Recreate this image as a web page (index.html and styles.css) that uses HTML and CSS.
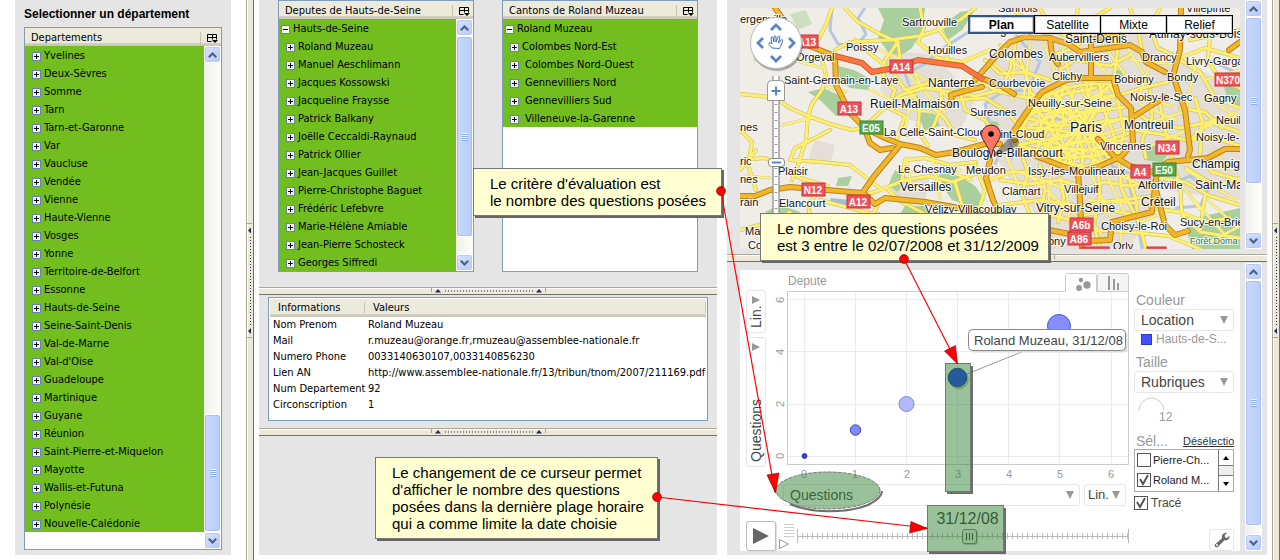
FILE: index.html
```html
<!DOCTYPE html>
<html lang="fr">
<head>
<meta charset="utf-8">
<title>Selectionner un département</title>
<link rel="stylesheet" href="styles.css">
</head>
<body>
<svg class="defs" aria-hidden="true">
  <symbol id="i-cols" viewBox="0 0 11 11"><path d="M.5 1.500h9v5M.5 1.500v7h4M.5 4.500h9M5.500 1.500v5" stroke="#000" fill="none"/><path d="M5 7h6l-3 3z"/></symbol>
  <symbol id="i-up" viewBox="0 0 9 6"><path d="M.8 5.200 4.500 1.500l3.700 3.700" fill="none" stroke="#4d6185" stroke-width="2.200"/></symbol>
  <symbol id="i-down" viewBox="0 0 9 6"><path d="M.8.800l3.700 3.700L8.200.800" fill="none" stroke="#4d6185" stroke-width="2.200"/></symbol>
  <symbol id="i-grip-h" viewBox="0 0 115 6"><path d="M.500 0v4M114.500 0v4" stroke="#a8a594"/><path d="M4 4.500h6L7 1zM105 4.500h6L108 1z" fill="#27275a"/><path d="M14 3h88" stroke="#27275a" stroke-dasharray="1 2"/></symbol>
  <symbol id="i-grip-v" viewBox="0 0 6 115"><path d="M0 .500h5M0 114.500h5" stroke="#a8a594"/><path d="M4 4.500v6L1 7.500zM4 105v6L1 108z" fill="#27275a"/><path d="M3.500 14v88" stroke="#27275a" stroke-dasharray="1 2"/></symbol>
</svg>

<main class="app">
  <section class="panel sidebar">
    <h1 class="title">Selectionner un département</h1>
    <div class="box">
      <header class="box-head"><span>Departements</span><svg class="cols"><use href="#i-cols"/></svg></header>
      <div class="box-body">
        <ul class="tree">
          <li><button class="tg" aria-label="Ouvrir"></button>Yvelines</li>
          <li><button class="tg" aria-label="Ouvrir"></button>Deux-Sèvres</li>
          <li><button class="tg" aria-label="Ouvrir"></button>Somme</li>
          <li><button class="tg" aria-label="Ouvrir"></button>Tarn</li>
          <li><button class="tg" aria-label="Ouvrir"></button>Tarn-et-Garonne</li>
          <li><button class="tg" aria-label="Ouvrir"></button>Var</li>
          <li><button class="tg" aria-label="Ouvrir"></button>Vaucluse</li>
          <li><button class="tg" aria-label="Ouvrir"></button>Vendée</li>
          <li><button class="tg" aria-label="Ouvrir"></button>Vienne</li>
          <li><button class="tg" aria-label="Ouvrir"></button>Haute-Vienne</li>
          <li><button class="tg" aria-label="Ouvrir"></button>Vosges</li>
          <li><button class="tg" aria-label="Ouvrir"></button>Yonne</li>
          <li><button class="tg" aria-label="Ouvrir"></button>Territoire-de-Belfort</li>
          <li><button class="tg" aria-label="Ouvrir"></button>Essonne</li>
          <li><button class="tg" aria-label="Ouvrir"></button>Hauts-de-Seine</li>
          <li><button class="tg" aria-label="Ouvrir"></button>Seine-Saint-Denis</li>
          <li><button class="tg" aria-label="Ouvrir"></button>Val-de-Marne</li>
          <li><button class="tg" aria-label="Ouvrir"></button>Val-d'Oise</li>
          <li><button class="tg" aria-label="Ouvrir"></button>Guadeloupe</li>
          <li><button class="tg" aria-label="Ouvrir"></button>Martinique</li>
          <li><button class="tg" aria-label="Ouvrir"></button>Guyane</li>
          <li><button class="tg" aria-label="Ouvrir"></button>Réunion</li>
          <li><button class="tg" aria-label="Ouvrir"></button>Saint-Pierre-et-Miquelon</li>
          <li><button class="tg" aria-label="Ouvrir"></button>Mayotte</li>
          <li><button class="tg" aria-label="Ouvrir"></button>Wallis-et-Futuna</li>
          <li><button class="tg" aria-label="Ouvrir"></button>Polynésie</li>
          <li><button class="tg" aria-label="Ouvrir"></button>Nouvelle-Calédonie</li>
        </ul>
        <div class="sb">
          <button aria-label="Haut"><svg><use href="#i-up"/></svg></button>
          <i class="gap-long"></i><i class="thumb t-short"></i>
          <button aria-label="Bas"><svg><use href="#i-down"/></svg></button>
        </div>
      </div>
    </div>
  </section>

  <div class="split-v first"><svg><use href="#i-grip-v"/></svg></div>

  <div class="col middle">
    <section class="panel trees">
      <div class="box">
        <header class="box-head"><span>Deputes de Hauts-de-Seine</span><svg class="cols"><use href="#i-cols"/></svg></header>
        <div class="box-body">
          <ul class="tree nested">
            <li class="root"><button class="tg open" aria-label="Fermer"></button>Hauts-de-Seine</li>
            <li><button class="tg" aria-label="Ouvrir"></button>Roland Muzeau</li>
            <li><button class="tg" aria-label="Ouvrir"></button>Manuel Aeschlimann</li>
            <li><button class="tg" aria-label="Ouvrir"></button>Jacques Kossowski</li>
            <li><button class="tg" aria-label="Ouvrir"></button>Jacqueline Fraysse</li>
            <li><button class="tg" aria-label="Ouvrir"></button>Patrick Balkany</li>
            <li><button class="tg" aria-label="Ouvrir"></button>Joëlle Ceccaldi-Raynaud</li>
            <li><button class="tg" aria-label="Ouvrir"></button>Patrick Ollier</li>
            <li><button class="tg" aria-label="Ouvrir"></button>Jean-Jacques Guillet</li>
            <li><button class="tg" aria-label="Ouvrir"></button>Pierre-Christophe Baguet</li>
            <li><button class="tg" aria-label="Ouvrir"></button>Frédéric Lefebvre</li>
            <li><button class="tg" aria-label="Ouvrir"></button>Marie-Hélène Amiable</li>
            <li><button class="tg" aria-label="Ouvrir"></button>Jean-Pierre Schosteck</li>
            <li><button class="tg" aria-label="Ouvrir"></button>Georges Siffredi</li>
          </ul>
          <div class="sb">
            <button aria-label="Haut"><svg><use href="#i-up"/></svg></button>
            <i class="thumb"></i><i class="gap-s"></i>
            <button aria-label="Bas"><svg><use href="#i-down"/></svg></button>
          </div>
        </div>
      </div>
      <div class="box">
        <header class="box-head"><span>Cantons de Roland Muzeau</span><svg class="cols"><use href="#i-cols"/></svg></header>
        <div class="box-body">
          <ul class="tree nested">
            <li class="root"><button class="tg open" aria-label="Fermer"></button>Roland Muzeau</li>
            <li><button class="tg" aria-label="Ouvrir"></button>Colombes Nord-Est</li>
            <li class="sp"><button class="tg" aria-label="Ouvrir"></button>Colombes Nord-Ouest</li>
            <li class="sp"><button class="tg" aria-label="Ouvrir"></button>Gennevilliers Nord</li>
            <li class="sp"><button class="tg" aria-label="Ouvrir"></button>Gennevilliers Sud</li>
            <li class="sp"><button class="tg" aria-label="Ouvrir"></button>Villeneuve-la-Garenne</li>
          </ul>
        </div>
      </div>
    </section>
    <div class="split-h"><svg><use href="#i-grip-h"/></svg></div>
    <section class="panel info">
      <div class="info-box">
        <table>
          <thead><tr><th>Informations</th><th>Valeurs</th></tr></thead>
          <tbody>
            <tr><td>Nom Prenom</td><td>Roland Muzeau</td></tr>
            <tr><td>Mail</td><td>r.muzeau@orange.fr,rmuzeau@assemblee-nationale.fr</td></tr>
            <tr><td>Numero Phone</td><td>0033140630107,0033140856230</td></tr>
            <tr><td>Lien AN</td><td>http://www.assemblee-nationale.fr/13/tribun/tnom/2007/211169.pdf</td></tr>
            <tr><td>Num Departement</td><td>92</td></tr>
            <tr><td>Circonscription</td><td>1</td></tr>
          </tbody>
        </table>
      </div>
    </section>
    <div class="split-h"><svg><use href="#i-grip-h"/></svg></div>
    <section class="panel rest"></section>
  </div>

  <div class="col right">
    <section class="panel map-panel">
      <div class="map">
        <svg class="map-svg" viewBox="740 8 500 241" preserveAspectRatio="xMinYMin slice">
          <defs>
            <g id="hw">
              <path d="M775 8 785 22 802 43 835 56 836 85 850 113 865 128 885 138 900 144 920 148 936 155 955 152 985 144 1000 144"/>
              <path d="M863 125 870 143 880 150 892 148M900 145 875 175 863 192"/>
              <path d="M740 196 755 196 770 190 790 187 863 193 875 204 885 198 925 202 960 208 985 214"/>
              <path d="M975 80 997 55 1010 42 1025 37 1050 38 1068 44 1080 52 1130 45 1142 52 1146 62 1165 72"/>
              <path d="M1015 140 1013 132 1028 110 1042 92 1066 80 1083 78 1113 78 1118 95 1131 108 1133 142 1122 156 1100 166 1080 172 1062 166 1036 156"/>
              <path d="M1091 78V45M1091 40 1130 30 1175 20M1181 8 1180 50 1173 76 1185 110 1190 150 1188 156M1133 117 1165 97M984 79 1000 85 1014 94M952 105 951 95 968 90 982 87"/>
              <path d="M1098 139 1115 157 1130 166 1152 172 1168 162 1208 158 1225 149 1240 149M1157 172 1152 212 1112 222 1110 240 1085 241"/>
              <path d="M1078 172 1080 200 1082 249M1156 190 1165 225 1175 235 1188 231M1049 230 1070 234M990 160 986 178 993 200 1000 215M1229 50 1240 42M1050 38 1052 55 1058 64"/>
            </g>
            <g id="mw">
              <path d="M740 94 760 96 775 98 790 108 808 116 830 124 852 130 863 128M808 116 812 104 822 90 826 75 822 60M808 116 806 140 798 165 792 180M830 130 815 138 795 148 790 160 820 162 850 165 880 188"/>
              <path d="M740 160 765 158 780 165 800 178 828 186M740 130 752 142 748 165 756 190M756 150 740 170M805 249 812 225 808 205 822 187M740 230 770 222 790 212"/>
              <path d="M818 40 826 25 832 8M835 50 850 42 890 40 920 36 938 30 960 20 975 8M845 8 858 22 880 34 898 42 900 60M855 40 872 55 893 72 905 90 918 86 940 80"/>
              <path d="M920 8 924 28 918 42 938 58 962 62 990 50M938 28 950 44 946 60M898 42 885 60 883 80 895 90 888 108 905 116 900 130 896 142"/>
              <path d="M863 128 880 112 900 95 925 88 952 92 975 96 1000 90M908 90 920 104 918 130 928 146M928 104 945 118 955 135 975 140M940 80 942 105 932 130 905 135"/>
              <path d="M865 195 880 190 905 180 930 176 952 182 980 172M880 200 870 220 868 249M888 190 902 202 925 214 955 215M905 160 925 158 950 165 976 162M905 160 902 180M820 200 850 208 880 216"/>
              <path d="M960 90 965 110 985 120 995 135M955 100 985 98 1008 112 1020 128M975 80 1000 92 1028 98 1050 92M985 60 1000 74 1025 72 1050 80M1000 45 1020 60 1030 85 1028 110M1015 45 1010 70 1000 92"/>
              <path d="M1040 8 1050 28 1072 38 1078 8M1010 8 1030 22 1050 28 1090 20 1110 8M1052 55 1075 48 1092 30M1060 70 1075 60 1110 66 1130 55M1110 20 1130 32 1160 25 1180 30M1110 30 1118 48 1114 78"/>
              <path d="M1130 8 1138 30 1142 52M1160 8 1150 28 1158 48 1180 58 1205 48 1240 58M1190 40 1210 36 1240 30M1195 8 1210 36 1208 60 1220 80M1180 60 1200 72 1215 98 1240 108M1220 80 1240 88"/>
              <path d="M1120 95 1142 88 1168 82M1133 110 1150 122 1180 128 1210 122 1240 132M1133 130 1160 134 1186 140 1215 138 1240 146M1150 90 1152 118 1142 140 1146 158M1180 108 1205 112 1222 128M1190 140 1212 120 1240 118M1200 156 1212 172 1240 180"/>
              <path d="M1195 98 1202 120 1200 156M1160 104 1165 130 1172 158M1160 178 1185 182 1210 196 1240 205M1172 160 1180 185 1182 215 1200 232 1240 238M1186 168 1215 186 1240 178M1150 208 1180 212 1205 222 1230 218M1205 196 1200 232"/>
              <path d="M1020 150 1028 172 1022 195 1030 215M1040 165 1045 190 1040 215 1052 240M1000 180 1030 184 1060 180 1080 186M1000 205 1040 200 1080 206 1120 200 1155 196M1060 178 1064 200 1058 222M1098 168 1100 195 1094 225 1100 249"/>
              <path d="M1080 190 1105 182 1130 186 1155 182M1118 158 1122 190 1135 215M1085 215 1110 210 1130 214M1128 175 1136 200 1138 220 1146 249M1092 230 1130 232 1168 236 1200 249M1050 215 1080 222M990 180 1010 172 1040 172M975 165 985 190 978 212M955 182 962 205"/>
            </g>
            <g id="paris">
              <path d="M1015 142 1022 128 1032 112 1046 96 1066 88 1088 84 1108 84 1117 96 1120 112 1124 132 1120 150 1106 160 1086 167 1062 162 1040 152 1022 146z"/>
              <path d="M1030 92 1050 105 1075 118 1090 126 1105 138M1035 110 1060 112 1092 112 1130 106M1015 128 1040 128 1070 132 1098 136M1018 145 1045 140 1070 134 1085 118 1088 98 1086 80M1040 160 1052 142 1064 122 1060 100 1050 90"/>
              <path d="M1050 168 1062 148 1076 134 1086 112 1100 94 1112 84M1080 175 1084 152 1076 132 1070 108 1074 90M1095 166 1090 148 1082 130 1096 112 1110 98M1030 105 1045 118 1056 140 1070 160 1076 176M1045 95 1062 106 1080 102 1118 94"/>
              <path d="M1028 118 1055 126 1085 124 1130 118M1025 138 1055 148 1090 150 1120 154M1040 155 1065 158 1095 156 1126 148M1100 86 1104 110 1112 130 1120 156M1064 84 1058 110 1046 132 1034 155M1022 122 1040 108 1065 94 1096 88M1050 150 1072 142 1104 142 1132 132"/>
            </g>
            <g id="st">
              <path d="M1036 100 1048 160M1042 96 1075 170M1055 92 1110 160M1066 86 1104 166M1030 126 1108 90M1028 134 1122 100M1036 146 1126 118M1040 154 1130 126M1050 162 1128 138M1080 84 1098 130M1092 82 1074 164M1104 84 1062 168M1116 96 1050 112M1024 130 1100 162M1034 104 1124 148M1084 100 1044 150M1110 106 1090 170M1056 98 1040 128"/>
              <path d="M990 60 1025 90M1000 54 1040 80M1015 48 1012 100M1030 44 1024 96M1044 44 1060 86M1062 46 1070 78M1075 44 1110 76M1100 40 1126 76M1120 36 1150 84M1130 60 1170 64M1136 96 1172 106M1140 104 1176 120M1140 125 1184 112M1140 150 1188 130M1150 64 1138 100M1196 60 1186 110M1205 80 1240 70M1206 96 1240 120M1196 132 1236 112M1214 150 1230 170"/>
              <path d="M1004 150 1024 200M1012 170 1070 190M1032 178 1076 216M1050 176 1048 226M1066 182 1070 226M1090 172 1110 216M1104 170 1128 220M1110 170 1150 190M1088 200 1148 204M1090 220 1106 240M1122 225 1120 249M1140 222 1170 210M1172 170 1200 210M1186 170 1236 200M1190 196 1226 236M1208 200 1236 226M1210 242 1240 226"/>
              <path d="M870 90 892 100 915 95M880 106 902 108 930 112M912 96 905 128M925 92 945 112M900 66 922 88 914 72 926 80M884 62 876 80M936 86 958 108M906 158 912 190M930 150 936 176 940 198M945 170 972 180M908 172 960 170M880 50 905 62M745 176 770 178M752 22 770 20M762 222 795 235M826 86 846 92M800 62 824 68M782 125 812 118"/>
            </g>
          </defs>
          <rect x="740" y="8" width="500" height="241" fill="#f0ede7"/>
          <path d="M985 75 1010 40 1050 30 1140 30 1180 60 1240 90V200L1160 190 1130 249 1050 249 1040 220 1010 180 985 140zM888 50 935 55 975 100 960 130 910 120 880 90zM890 175 930 178 925 200 895 196zM815 140 835 145 830 165 808 158z" fill="#e4dfd6"/>
          <g fill="#a9cf9c">
            <path d="M878 8H925L922 30 912 48 900 56 888 52 878 38 884 20zM942 26 960 12 975 10 962 30 948 40z"/>
            <path d="M838 66 854 70 872 80 868 90 850 88 840 80zM824 88 840 96 848 110 836 116 820 100 808 92z"/>
            <path d="M918 112 935 114 940 126 924 130zM786 52 796 60 786 68 778 62zM895 170 906 178 898 192 888 186z"/>
            <path d="M938 172 960 176 975 186 985 200 975 208 952 200 945 190zM984 120 998 122 1000 132 988 134zM765 212 780 205 800 212V222L780 224z"/>
            <path d="M1142 146 1158 142 1172 150 1162 162 1144 160zM1222 80 1240 84V108L1228 100zM1186 228 1204 216 1240 208V249H1192zM838 178 852 176 848 186 836 186zM905 206 925 206 930 214H900zM1116 70 1124 70 1122 80 1114 78zM1060 152 1070 154 1068 162 1060 160z"/>
            <path d="M752 46 764 44 766 60 754 62zM790 14 806 10 812 24 798 30z" opacity=".5"/>
          </g>
          <g class="river">
            <path d="M832 8 830 30 838 44 856 46 866 34 858 18 865 8M1004 20 975 28 940 50 925 64 905 74 912 92 925 108M1004 20 1020 40 1040 62 1028 90 1002 92 985 104 990 125 1010 138 1012 158 1000 150 995 165"/>
            <path d="M1018 150 1035 140 1048 118 1070 120 1090 138 1112 165 1128 180 1134 205 1142 249M1112 166 1140 178 1170 184 1190 176 1208 190 1200 206 1175 208M1208 60 1240 74"/>
          </g>
          <path d="M830 198 850 200 846 207 832 205zM868 215 880 212 884 222z" fill="#a3bddf"/>
          <use href="#st" class="st0"/><use href="#mw" class="mw0"/><use href="#paris" class="mw0"/><use href="#st" class="st1"/><use href="#mw" class="mw1"/><use href="#paris" class="mw1"/>
          <use href="#hw" class="hw0"/><use href="#hw" class="hw1"/>
          <path d="M835 56 862 63 872 72 895 68 918 60 962 66 984 80" class="toll0"/><path d="M835 56 862 63 872 72 895 68 918 60 962 66 984 80" class="toll1"/>
          <g class="lbl">
            <g class="sm">
              <text x="740" y="23">ergenville</text><text x="902" y="26">Sartrouville</text><text x="846" y="51">Poissy</text><text x="928" y="54">Houilles</text><text x="796" y="61">Orgeval</text><text x="784" y="84">Saint-Germain-en-Laye</text><text x="970" y="116">Suresnes</text><text x="884" y="136">La Celle-Saint-Cloud</text><text x="987" y="138">Saint-Cloud</text><text x="898" y="173">Le Chesnay</text><text x="966" y="174">Meudon</text><text x="925" y="213">Vélizy-Villacoublay</text><text x="779" y="207">Elancourt</text><text x="778" y="175">Plaisir</text><text x="740" y="131">nes</text><text x="740" y="165">ric</text><text x="740" y="183">nes</text><text x="740" y="206">rain</text><text x="745" y="235">Ma</text><text x="748" y="249">Co</text><text x="1002" y="195">Clamart</text><text x="998" y="12">Sannois</text><text x="1186" y="12">Villepinte</text><text x="1049" y="61">Aubervilliers</text><text x="1142" y="61">Drancy</text><text x="1186" y="65">Livry-Garga</text><text x="1052" y="80">Clichy</text><text x="989" y="87">Courbevoie</text><text x="1114" y="83">Bobigny</text><text x="1167" y="81">Bondy</text><text x="1130" y="101">Noisy-le-Sec</text><text x="1204" y="102">Gagny</text><text x="1028" y="107">Neuilly-sur-Seine</text><text x="1216" y="124">Neuil</text><text x="1196" y="141">Noisy-le-</text><text x="1100" y="150">Vincennes</text><text x="1028" y="175">Issy-les-Moulineaux</text><text x="1138" y="189">Alfortville</text><text x="1064" y="193">Villejuif</text><text x="1101" y="230">Choisy-le-Roi</text><text x="1180" y="226">Sucy-en-Brie</text><text x="1048" y="245">ony</text><text x="1113" y="250">Orly</text>
            </g>
            <g class="md">
              <text x="928" y="87">Nanterre</text><text x="870" y="108">Rueil-Malmaison</text><text x="952" y="157">Boulogne-Billancourt</text><text x="900" y="191">Versailles</text><text x="1065" y="43">Saint-Denis</text><text x="1149" y="38">Aulnay-sous-Bois</text><text x="989" y="58">Colombes</text><text x="1124" y="129">Montreuil</text><text x="1192" y="168">Champig</text><text x="1195" y="189">Saint-Ma</text><text x="1141" y="206">Créteil</text><text x="1036" y="212">Vitry-sur-Seine</text><text x="988" y="34">Argenteuil</text>
            </g>
            <text class="lg" x="1070" y="132">Paris</text>
            <g class="wood"><text x="1190" y="244">Forêt Doma</text></g>
          </g>
          <g class="shield">
            <rect x="797" y="35" width="21" height="13"/><rect x="890" y="60" width="23" height="13"/><rect x="838" y="102" width="23" height="13"/><rect x="802" y="183" width="23" height="13"/><rect x="847" y="195" width="23" height="13"/><rect x="1215" y="73" width="30" height="13"/><rect x="1156" y="141" width="23" height="13"/><rect x="1131" y="165" width="19" height="13"/><rect x="1070" y="218" width="23" height="13"/><rect x="1068" y="232" width="23" height="13"/><rect x="1081" y="247" width="28" height="13"/><rect x="1147" y="247" width="19" height="13"/>
            <rect class="e" x="860" y="121" width="23" height="13"/><rect class="e" x="1153" y="163" width="23" height="13"/>
            <text x="807" y="46">A13</text><text x="901" y="71">A14</text><text x="849" y="113">A13</text><text x="813" y="194">N12</text><text x="858" y="206">A12</text><text x="1228" y="84">N370</text><text x="1167" y="152">N34</text><text x="1140" y="176">A4</text><text x="1081" y="229">A6b</text><text x="1079" y="243">A86</text><text x="871" y="132">E05</text><text x="1164" y="174">E50</text>
          </g>
          <path d="M993 155 1008 139Q1022 136 1018 146L995 156z" fill="#000" opacity=".35"/>
          <path d="M991 158Q990 149 984 141A9.500 9.500 0 1 1 998 141Q992 149 991 158z" fill="#fd7567" stroke="#5a1e19"/><circle cx="991" cy="134" r="2.800"/>
        </svg>
        <svg class="map-nav" viewBox="0 0 54 200">
          <path d="M26 60v145" stroke="#777" stroke-width="7"/><path d="M26 60v145" stroke="#fff" stroke-width="5"/><path d="M26 72v130" stroke="#999" stroke-width="3" stroke-dasharray="1 7"/>
          <circle cx="27" cy="29" r="26" fill="#555" opacity=".45"/><circle cx="26" cy="27" r="25.500" fill="#fff" stroke="#bbb"/>
          <path d="M21 14l5-5 5 5M21 40l5 5 5-5M13 22l-5 5 5 5M39 22l5 5-5 5" fill="none" stroke="#5b83cb" stroke-width="2.800"/>
          <path d="M22 32c-2-3-4-4-3-5s2 0 3 1l-1-6c0-1.500 1.500-1.500 2 0l1 4v-5c0-1.500 2-1.500 2 0v5l2-5c.5-1.500 2-1 1.800.5L28.500 27l2.500-3c1-1 2-.2 1.500 1-1 3-1.500 5-3 7.500z" fill="#fff" stroke="#456fb8"/>
          <path d="M17.500 84.500v-16q0-4 4-4h9q4 0 4 4v16z" fill="#fff" stroke="#999"/><path d="M21.500 75h9M26 70.500v9" stroke="#5b83cb" stroke-width="2"/>
          <rect x="18.500" y="142.500" width="16" height="8" rx="3" fill="#fff" stroke="#888"/><path d="M22 146.500h9" stroke="#5b83cb" stroke-width="2"/>
        </svg>
        <div class="map-types"><button class="on">Plan</button><button>Satellite</button><button>Mixte</button><button>Relief</button></div>
      </div>
      <div class="sb">
        <button aria-label="Haut"><svg><use href="#i-up"/></svg></button>
        <i class="thumb"></i><i class="gap-m"></i>
        <button aria-label="Bas"><svg><use href="#i-down"/></svg></button>
      </div>
    </section>
    <div class="split-h"><svg><use href="#i-grip-h"/></svg></div>
    <section class="panel chart-panel">
      <div class="chart">
        <div class="chart-main">
          <div class="chart-top">
            <div class="y-axis">
              <div class="vsel v-scale"><select aria-label="Échelle verticale"><option>Lin.</option></select></div>
              <div class="vsel v-metric"><select aria-label="Axe vertical"><option>Questions</option></select></div>
            </div>
            <div class="plot-col">
              <svg class="plot" viewBox="770 270 360 214" preserveAspectRatio="xMinYMin meet">
                <path d="M804.500 292v172M855.500 292v172M906.500 292v172M957.500 292v172M1008.500 292v172M1059.500 292v172M1111.500 292v172M788 299.500h340M788 351.500h340M788 404.500h340M788 456.500h340" stroke="#ebebeb"/>
                <path d="M1065.500 291.500v-16q0-2 2-2h27q2 0 2 2v16" fill="#fff" stroke="#ccc"/>
                <path d="M1097.500 291.500v-16q0-2 2-2h27q2 0 2 2v16" fill="#f5f5f5" stroke="#ccc"/>
                <path d="M1065.500 291.500H787.500V464.500H1128.500V291.500H1097" fill="none" stroke="#ccc"/>
                <g fill="#999"><circle cx="1081" cy="280" r="2.200"/><circle cx="1079" cy="288" r="3"/><circle cx="1087" cy="285" r="3.700"/><path d="M1108 276h2v14h-2zM1113 279h2v11h-2zM1117 283h2v7h-2z"/></g>
                <g class="ax"><text x="788" y="285" class="nm">Depute</text>
                  <g text-anchor="middle"><text x="804" y="478">0</text><text x="855" y="478">1</text><text x="907" y="478">2</text><text x="958" y="478">3</text><text x="1009" y="478">4</text><text x="1060" y="478">5</text><text x="1111" y="478">6</text>
                  <text transform="translate(784 300) rotate(-90)">6</text><text transform="translate(784 352) rotate(-90)">4</text><text transform="translate(784 404) rotate(-90)">2</text><text transform="translate(784 456) rotate(-90)">0</text></g>
                </g>
                <g stroke="#3c46a8"><circle cx="804.500" cy="456" r="2.500" fill="#2a3af0"/><circle cx="855.500" cy="430" r="5.200" fill="#7f88ff"/><circle cx="906.500" cy="404" r="7.500" fill="#b2b9ff" stroke="#8088c8"/><circle cx="1059" cy="326" r="11.500" fill="#858dff" stroke="#4a55c8"/></g>
                <circle cx="959" cy="379.500" r="10" fill="#888" opacity=".5"/><circle cx="957.500" cy="377.500" r="9.300" fill="#1430ff" stroke="#07248e"/>
                <path d="M967 374 1024 351" stroke="#999"/>
                <rect x="970.500" y="331.500" width="157" height="21" rx="4" fill="#ddd"/><rect x="968.500" y="329.500" width="157" height="21" rx="4" fill="#fff" stroke="#888"/>
                <text class="tip" x="974" y="345">Roland Muzeau, 31/12/08</text>
              </svg>
              <div class="x-axis"><select class="x-metric" aria-label="Axe horizontal"><option>Questions</option></select><select class="x-scale" aria-label="Échelle horizontale"><option>Lin.</option></select></div>
            </div>
          </div>
          <div class="timebar">
            <button class="play" aria-label="Lecture"><svg viewBox="0 0 16 16"><path d="M0 0 16 8 0 16z" fill="#666"/></svg></button>
            <svg class="speed" viewBox="0 0 18 28"><path d="M6 1.500h10M6 4.500h10M6 7.500h10M6 10.500h10M6 13.500h10" stroke="#ccc"/><path d="M1.500 16.500v9l9-4.500z" fill="#fff" stroke="#999"/></svg>
            <div class="time">
              <output class="date">31/12/08</output>
              <input type="range" min="0" max="100" value="52" aria-label="Date">
            </div>
          </div>
        </div>
        <aside class="side">
          <label class="cap" for="couleur">Couleur</label>
          <select id="couleur"><option>Location</option></select>
          <p class="legend"><i></i>Hauts-de-S...</p>
          <label class="cap" for="taille">Taille</label>
          <select id="taille"><option>Rubriques</option></select>
          <div class="size"><svg viewBox="0 0 28 14"><path d="M1 13.500a12.500 12.500 0 0 1 25 0" fill="none" stroke="#ccc"/></svg><span>12</span></div>
          <div class="sel-head"><span>Sél...</span><a href="#">Désélectio</a></div>
          <div class="sel-list">
            <div class="opts"><label><input type="checkbox">Pierre-Ch...</label><label><input type="checkbox" checked>Roland M...</label></div>
            <div class="mini-sb"><button aria-label="Haut"><svg viewBox="0 0 6 4"><path d="M0 4h6L3 0z"/></svg></button><button aria-label="Bas"><svg viewBox="0 0 6 4"><path d="M0 0h6L3 4z"/></svg></button></div>
          </div>
          <label class="trace"><input type="checkbox" checked>Tracé</label>
          <button class="tool" aria-label="Options"><svg viewBox="0 0 16 16"><path d="M1 12.500 8 6.300C7.300 3 9.500.500 13 .800L10.600 3.400l.5 2 2 .5L15.500 3.500c.5 3.500-2.200 5.500-5.200 4.800L3.800 15C1.800 16 0 14.200 1 12.500z" fill="#666"/><circle cx="3" cy="13" r="1" fill="#fff"/></svg></button>
        </aside>
      </div>
      <div class="sb">
        <button aria-label="Haut"><svg><use href="#i-up"/></svg></button>
        <i class="thumb"></i><i class="gap-xs"></i>
        <button aria-label="Bas"><svg><use href="#i-down"/></svg></button>
      </div>
    </section>
  </div>

  <div class="split-v last"><svg><use href="#i-grip-v"/></svg></div>

  <div class="notes">
    <p class="note n1">Le critère d'évaluation est<br>le nombre des questions posées</p>
    <p class="note n2">Le nombre des questions posées<br>est 3 entre le 02/07/2008 et 31/12/2009</p>
    <p class="note n3">Le changement de ce curseur permet<br>d'afficher le nombre des questions<br>posées dans la dernière plage horaire<br>qui a comme limite la date choisie</p>
    <svg class="arrows" viewBox="0 0 1280 560">
      <g fill="none" stroke="#555" stroke-width="2" opacity=".85"><path d="M947 493H972V366M929 553H1005V508"/><path d="M790 504C812 514 848 513 868 505Q882 498 882 491"/></g>
      <g fill="#358535" fill-opacity=".5" stroke="#777"><rect x="945.500" y="363.500" width="25" height="128"/><rect x="927.500" y="505.500" width="76" height="46"/><ellipse cx="828" cy="490.500" rx="52" ry="18.500" stroke-dasharray="4 1"/></g>
      <path d="M721 191 775 492M904 259 957 363M657 497 927 528" stroke="#f00" stroke-width="1.200" fill="none"/>
      <g fill="#f00" stroke="#800" stroke-width=".6"><path d="M767 475 779 473 775.500 493zM944.500 351 955.500 345.500 957.500 364zM911 521.500 909.500 533 927.500 528.500z"/><circle cx="721" cy="191" r="4.500"/><circle cx="904" cy="259" r="4.500"/><circle cx="657" cy="497" r="4.500"/></g>
    </svg>
  </div>
</main>
</body>
</html>
```
FILE: styles.css
```css
* { box-sizing: border-box; }
body { margin: 0; background: #fff; color: #000; font: 11px/18px "DejaVu Sans Condensed", "Noto Sans", sans-serif; }
button, select, input { font: inherit; color: inherit; margin: 0; padding: 0; }
ul, p, h1 { margin: 0; padding: 0; }
svg { display: block; }
.defs { position: absolute; width: 0; height: 0; }

.app { position: relative; display: flex; min-height: 100vh; padding-left: 15px; overflow: hidden; }
.panel { background: #e5e5e5; }
.col { display: flex; flex-direction: column; min-width: 0; padding-bottom: 5px; }
.middle { flex: 458 1 0; margin-left: 5px; }
.right { flex: 540 1 0; margin-left: 10px; }

/* splitters */
.split-v { flex: none; width: 8px; display: flex; align-items: center; justify-content: center; background: #ece9d8; border-left: 1px solid #aca899; border-right: 1px solid #716f64; box-shadow: inset 1px 0 #fff; }
.split-v svg { width: 6px; height: 115px; }
.split-v.first { margin-left: 15px; }
.split-v.last { margin-left: 5px; }
.split-h { flex: none; height: 8px; display: flex; align-items: center; justify-content: center; background: #ece9d8; border-top: 1px solid #aca899; border-bottom: 1px solid #716f64; box-shadow: inset 0 1px #fff; }
.split-h svg { width: 115px; height: 6px; }

/* tree boxes */
.sidebar { flex: none; width: 216px; margin-bottom: 5px; padding: 5px 9px; display: flex; flex-direction: column; }
.title { font: bold 12px/18px "Liberation Sans", Arial, sans-serif; padding-bottom: 4px; }
.box { flex: 1; min-width: 0; display: flex; flex-direction: column; background: #fff; border: 1px solid #7f9db9; }
.box-head { height: 18px; flex: none; display: flex; justify-content: space-between; align-items: center; padding: 2px 3px 0 6px; background: linear-gradient(#ebeadb 15px, #d6d2c2 15px, #c9c4b3); }
.box-head span { flex: 1; border-right: 1px solid #c7c5b2; line-height: 12px; }
.cols { width: 11px; height: 11px; margin-left: 6px; }
.box-body { flex: 1; display: flex; align-items: stretch; }
.tree { flex: 1; min-width: 0; list-style: none; align-self: flex-start; background: #72be1e; }
.tree li { display: flex; align-items: center; height: 18px; padding: 2px 0 0 7px; white-space: nowrap; }
.tree.nested .root { padding-left: 2px; }
.tree .sp .tg { margin-right: 6px; }
.tg { flex: none; width: 9px; height: 9px; margin-right: 3px; border: 1px solid #6a80ad; background: linear-gradient(#000, #000) center / 5px 1px no-repeat, linear-gradient(#000, #000) center / 1px 5px no-repeat, #f4f3ee; }
.tg.open { background: linear-gradient(#000, #000) center / 5px 1px no-repeat, #f4f3ee; }
.trees { display: flex; gap: 28px; height: 287px; flex: none; padding: 0 19px 15px; }

/* scroll bars */
.sb { flex: none; width: 17px; display: flex; flex-direction: column; background: linear-gradient(90deg, #f1f0ea, #fefefb); }
.sb button { flex: none; height: 17px; display: flex; align-items: center; justify-content: center; border: 1px solid #fff; border-radius: 3px; background: linear-gradient(135deg, #d8e4ff, #b4c9f8); box-shadow: inset 0 0 0 1px #b9cbf3; }
.sb button svg { width: 9px; height: 6px; }
.thumb { flex: 1; border: 1px solid #fff; border-radius: 3px; box-shadow: inset 0 0 0 1px #a9bff0; background: repeating-linear-gradient(#eef4ff 0 1px, #8cb0f8 1px 2px) center / 6px 8px no-repeat, linear-gradient(90deg, #c9d8fd, #b9cdfb); }
.t-short { flex: 0 0 118px; }
.gap-long { flex: 1; }
.gap-s { flex: 0 0 17px; }
.gap-m { flex: 0 0 48px; }
.gap-xs { flex: 0 0 8px; }

/* details table */
.info { flex: none; padding: 2px 9px 7px; }
.info-box { height: 124px; background: #fff; border: 1px solid #7f9db9; padding: 1px; }
.info table { width: 100%; table-layout: fixed; border-collapse: collapse; line-height: 16px; white-space: nowrap; }
.info th { height: 18px; padding: 0 0 0 8px; font-weight: normal; text-align: left; background: linear-gradient(#c7c5b2, #c7c5b2) right 3px / 1px 11px no-repeat, linear-gradient(#ebeadb 15px, #d6d2c2 15px, #c9c4b3); }
.info th:first-child { width: 95px; }
.info td { height: 16px; padding: 0 0 0 3px; }
.rest { flex: 1; }

/* map */
.map-panel { flex: none; display: flex; gap: 5px; padding: 0 5px 5px 13px; }
.map { position: relative; flex: 1; min-width: 0; margin-top: 8px; height: 241px; overflow: hidden; }
.map-svg { width: 100%; height: 100%; }
.map-svg use { fill: none; stroke-linejoin: round; stroke-linecap: round; }
.river { fill: none; stroke: #b4c8e2; stroke-width: 3; stroke-linejoin: round; }
.st0 { stroke: #d6cc98; stroke-width: 3; }
.st1 { stroke: #fff27c; stroke-width: 2; }
.mw0 { stroke: #c9b766; stroke-width: 4; }
.mw1 { stroke: #fff06c; stroke-width: 3; }
.hw0 { stroke: #b98417; stroke-width: 6; }
.hw1 { stroke: #f3b62a; stroke-width: 4; }
.toll0, .toll1 { fill: none; stroke: #c5632c; stroke-width: 6; }
.toll1 { stroke: #ff7541; stroke-width: 4; }
.lbl text { font-family: "Liberation Sans", Arial, sans-serif; fill: #111; stroke: #fff; stroke-opacity: .8; stroke-width: 2px; paint-order: stroke; }
.lbl .sm { font-size: 11px; }
.lbl .md { font-size: 12px; }
.lbl .lg { font-size: 14px; }
.lbl .wood text { font-size: 9px; fill: #3b7a45; }
.shield rect { fill: #f0525a; stroke: #c6323c; }
.shield .e { fill: #55a848; stroke: #3a8430; }
.shield text { font: bold 10px "Liberation Sans", Arial, sans-serif; fill: #fff; text-anchor: middle; }
.map-nav { position: absolute; left: 10px; top: 8px; width: 54px; height: 200px; }
.map-types { position: absolute; right: 7px; top: 7px; display: flex; }
.map-types button { width: 67px; height: 19px; margin-left: -1px; border: 1px solid #000; background: #fff; font: 12px/16px "Liberation Sans", Arial, sans-serif; box-shadow: inset 0 0 0 1px #ccc; }
.map-types .on { font-weight: bold; border: 2px solid #345684; }

/* motion chart */
.chart-panel { flex: 1; display: flex; gap: 5px; padding: 1px 5px 4px 13px; font-family: "Liberation Sans", Arial, sans-serif; color: #444; }
.chart { flex: 1; min-width: 0; margin-top: 7px; background: #fff; display: flex; gap: 4px; padding: 0 6px; }
.chart-main { flex: 1; min-width: 0; display: flex; flex-direction: column; }
.chart-top { display: flex; gap: 4px; }
.chart select { appearance: none; border: 1px solid #e6e6e6; border-radius: 3px; height: 22px; padding: 0 6px; color: #444; font-size: 14px; background: url("data:image/svg+xml,%3Csvg xmlns='http://www.w3.org/2000/svg' width='8' height='8'%3E%3Cpath d='M0 0h8L4 8z' fill='%23999'/%3E%3C/svg%3E") right 5px center no-repeat #fff; }
.y-axis { width: 20px; padding-top: 20px; display: flex; flex-direction: column; gap: 4px; }
.vsel { position: relative; }
.v-scale { height: 43px; }
.v-metric { height: 130px; }
.vsel select { position: absolute; left: 0; top: 100%; height: 20px; padding: 0 4px; transform: rotate(-90deg); transform-origin: 0 0; }
.v-scale select { width: 43px; }
.v-metric select { width: 130px; }
.plot-col { flex: 1; min-width: 0; }
.plot { width: 100%; height: 214px; font-family: "Liberation Sans", Arial, sans-serif; }
.ax { font-size: 11px; fill: #999; }
.ax .nm { font-size: 12px; }
.tip { font-size: 13px; fill: #444; }
.x-axis { display: flex; gap: 4px; padding: 0 4px 0 13px; }
.x-metric { flex: 1; min-width: 0; }
.chart .x-scale { width: 42px; padding: 0 3px; font-size: 13px; }
.timebar { flex: 1; display: flex; align-items: flex-end; }
.play { width: 30px; height: 30px; display: flex; align-items: center; justify-content: center; background: #fff; border: 1px solid #bbb; border-radius: 3px; box-shadow: 1px 1px 1px #ddd; }
.play svg { width: 16px; height: 16px; }
.speed { width: 18px; height: 28px; margin-left: 2px; }
.time { position: relative; flex: 1; height: 30px; margin: 0 1px; }
.date { position: absolute; left: 42%; bottom: 22px; font-size: 16px; line-height: 20px; color: #333; }
.time input { appearance: none; display: block; width: 100%; height: 14px; margin-top: 8px; background: linear-gradient(#bbb, #bbb) left / 1px 14px no-repeat, linear-gradient(#bbb, #bbb) right / 1px 14px no-repeat, linear-gradient(#bbb, #bbb) center / 100% 1px no-repeat, repeating-linear-gradient(90deg, #bbb 0 1px, transparent 1px 5px) center / 100% 6px no-repeat; }
.time input::-webkit-slider-thumb { appearance: none; width: 15px; height: 15px; border: 1px solid #777; border-radius: 3px; background: repeating-linear-gradient(90deg, #333 0 1px, transparent 1px 3px) center / 7px 7px no-repeat, #eee; box-shadow: 1px 1px 1px #bbb; }

.side { flex: none; width: 100px; padding-top: 21px; display: flex; flex-direction: column; font-size: 14px; }
.cap { color: #999; padding-left: 2px; line-height: 18px; }
.legend { display: flex; align-items: center; gap: 4px; height: 16px; margin-bottom: 6px; padding-left: 7px; color: #999; font-size: 12px; white-space: nowrap; }
.legend i { width: 11px; height: 11px; background: #4450ff; border: 1px solid #2a3ad0; }
.size { display: flex; height: 40px; padding: 4px 0 0 4px; color: #999; font-size: 12px; }
.size svg { width: 28px; height: 14px; }
.size span { margin: 12px 0 0 -7px; line-height: 16px; }
.sel-head { display: flex; justify-content: space-between; height: 16px; padding-left: 2px; line-height: 16px; color: #999; white-space: nowrap; }
.sel-head a { width: 51px; overflow: hidden; font-size: 11px; color: #333; }
.sel-list { display: flex; height: 43px; border: 1px solid #aaa; color: #222; font-size: 12px; }
.opts { flex: 1; min-width: 0; }
.opts label { display: flex; align-items: center; height: 20px; gap: 2px; padding-left: 2px; white-space: nowrap; overflow: hidden; font-size: 11px; }
.side input { appearance: none; flex: none; width: 14px; height: 14px; border: 1px solid #555; background: #fff; }
.side input:checked { background: url("data:image/svg+xml,%3Csvg xmlns='http://www.w3.org/2000/svg' width='12' height='12'%3E%3Cpath d='M2 5l3 5 5-9' fill='none' stroke='%23555' stroke-width='2'/%3E%3C/svg%3E") center no-repeat #fff; }
.mini-sb { width: 15px; display: flex; flex-direction: column; justify-content: space-between; background: #eee; border-left: 1px solid #777; }
.mini-sb button { height: 16px; display: flex; align-items: center; justify-content: center; background: #fff; border: 0; border-bottom: 1px solid #777; }
.mini-sb button + button { border-bottom: 0; border-top: 1px solid #777; }
.mini-sb svg { width: 6px; height: 4px; }
.trace { display: flex; align-items: center; gap: 3px; height: 16px; margin-top: 3px; font-size: 12px; }
.tool { align-self: flex-end; margin-top: auto; width: 25px; height: 22px; display: flex; align-items: center; justify-content: center; background: #fff; border: 1px solid #e6e6e6; border-radius: 3px; }
.tool svg { width: 16px; height: 16px; }

/* annotations */
.notes { position: absolute; left: 0; top: 0; width: 1280px; height: 560px; pointer-events: none; }
.note { position: absolute; padding: 6px 16px; background: #ffffd2; border: 1px solid #777; box-shadow: 2px 2px #666; font: 15px/17px "Liberation Sans", Arial, sans-serif; white-space: nowrap; }
.n1 { left: 473px; top: 168px; width: 249px; }
.n2 { left: 760px; top: 213px; width: 289px; }
.n3 { left: 375px; top: 457px; width: 283px; }
.arrows { position: absolute; inset: 0; width: 1280px; height: 560px; }
```
